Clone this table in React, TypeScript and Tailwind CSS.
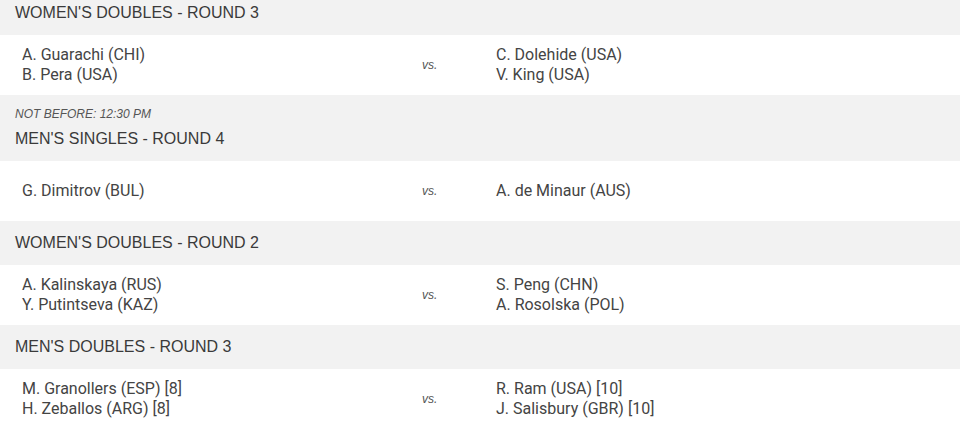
import React from "react";

type Match = {
  title: string;
  note?: string;
  left: string[];
  right: string[];
  first?: boolean;
};

const matches: Match[] = [
  { title: "WOMEN'S DOUBLES - ROUND 3", left: ["A. Guarachi (CHI)", "B. Pera (USA)"], right: ["C. Dolehide (USA)", "V. King (USA)"], first: true },
  { title: "MEN'S SINGLES - ROUND 4", note: "NOT BEFORE: 12:30 PM", left: ["G. Dimitrov (BUL)"], right: ["A. de Minaur (AUS)"] },
  { title: "WOMEN'S DOUBLES - ROUND 2", left: ["A. Kalinskaya (RUS)", "Y. Putintseva (KAZ)"], right: ["S. Peng (CHN)", "A. Rosolska (POL)"] },
  { title: "MEN'S DOUBLES - ROUND 3", left: ["M. Granollers (ESP) [8]", "H. Zeballos (ARG) [8]"], right: ["R. Ram (USA) [10]", "J. Salisbury (GBR) [10]"] },
];

export default function App() {
  return (
    <div className="w-[960px] h-[429px] overflow-hidden bg-white text-[#444]">
      {matches.map((m, i) => (
        <div key={i}>
          <div
            className={
              "bg-[#f2f2f2] pl-[15px] " +
              (m.first ? "pt-[3px] pb-[12px]" : m.note ? "pt-[12px] pb-[12px]" : "py-[12px]")
            }
            style={{ fontFamily: '"Liberation Sans", Arial, sans-serif' }}
          >
            {m.note && (
              <div className="text-[12px] leading-[14px] italic mb-[8px] text-[#555]">{m.note}</div>
            )}
            <div className="text-[16px] leading-[20px] text-[#3a3a3a]">{m.title}</div>
          </div>
          <div
            className="h-[60px] grid grid-cols-[400px_74px_1fr] items-center pl-[22px] text-[16px] leading-[20px]"
            style={{ fontFamily: 'Roboto, "Liberation Sans", sans-serif' }}
          >
            <div className="flex flex-col">
              {m.left.map((n) => (
                <span key={n}>{n}</span>
              ))}
            </div>
            <div className="italic text-[12px] text-[#555]" style={{ fontFamily: '"Liberation Sans", Arial, sans-serif' }}>vs.</div>
            <div className="flex flex-col">
              {m.right.map((n) => (
                <span key={n}>{n}</span>
              ))}
            </div>
          </div>
        </div>
      ))}
    </div>
  );
}
